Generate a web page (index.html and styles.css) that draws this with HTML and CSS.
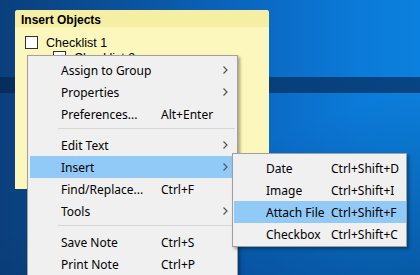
FILE: index.html
```html
<!DOCTYPE html>
<html lang="en">
<head>
    <meta charset="UTF-8">
    <meta name="viewport" content="width=device-width, initial-scale=1.0">
    <title>Insert Objects</title>
    <link rel="stylesheet" href="styles.css">
</head>
<body>
    <div class="desktop">
        <div class="band"></div>

        <div class="note">
            <div class="note-head">Insert Objects</div>
            <div class="note-body">
                <div class="check-row"><span class="box"></span>Checklist 1</div>
                <div class="check-row indent"><span class="box checked">&#10003;</span>Checklist 2</div>
            </div>
        </div>

        <div class="menu main-menu">
            <div class="item"><span>Assign to Group</span><span></span><svg class="arrow" width="5" height="8" viewBox="0 0 5 8"><polyline points="0.5,0.5 4,4 0.5,7.5"/></svg></div>
            <div class="item"><span>Properties</span><span></span><svg class="arrow" width="5" height="8" viewBox="0 0 5 8"><polyline points="0.5,0.5 4,4 0.5,7.5"/></svg></div>
            <div class="item"><span>Preferences...</span><span>Alt+Enter</span></div>
            <div class="sep"></div>
            <div class="item"><span>Edit Text</span><span></span><svg class="arrow" width="5" height="8" viewBox="0 0 5 8"><polyline points="0.5,0.5 4,4 0.5,7.5"/></svg></div>
            <div class="item active"><span>Insert</span><span></span><svg class="arrow" width="5" height="8" viewBox="0 0 5 8"><polyline points="0.5,0.5 4,4 0.5,7.5"/></svg></div>
            <div class="item"><span>Find/Replace...</span><span>Ctrl+F</span></div>
            <div class="item"><span>Tools</span><span></span><svg class="arrow" width="5" height="8" viewBox="0 0 5 8"><polyline points="0.5,0.5 4,4 0.5,7.5"/></svg></div>
            <div class="sep"></div>
            <div class="item"><span>Save Note</span><span>Ctrl+S</span></div>
            <div class="item"><span>Print Note</span><span>Ctrl+P</span></div>
        </div>

        <div class="menu sub-menu">
            <div class="item"><span>Date</span><span>Ctrl+Shift+D</span></div>
            <div class="item"><span>Image</span><span>Ctrl+Shift+I</span></div>
            <div class="item active"><span>Attach File</span><span>Ctrl+Shift+F</span></div>
            <div class="item"><span>Checkbox</span><span>Ctrl+Shift+C</span></div>
        </div>
    </div>
</body>
</html>
```

FILE: styles.css
```css
body {
    margin: 0;
    font-family: "Noto Sans", sans-serif;
}
.desktop {
    position: relative;
    width: 420px;
    height: 275px;
    overflow: hidden;
    background:
        linear-gradient(160deg, rgba(0, 20, 60, 0) 55%, rgba(0, 20, 60, 0.35) 100%),
        linear-gradient(90deg, #0a3f7c 0%, #0b4f96 25%, #0a68c2 60%, #0b7ad8 85%, #0c80de 100%);
}
.band {
    position: absolute;
    left: 0;
    right: 0;
    top: 77px;
    height: 16px;
    background: linear-gradient(90deg, #052e5c, #073f78 60%, #074583);
}

/* sticky note */
.note {
    position: absolute;
    left: 15px;
    top: 10px;
    width: 254px;
    height: 179px;
    background: #fcf8bd;
    border-radius: 3px 3px 0 0;
    font-family: "Liberation Sans", Arial, sans-serif;
    font-size: 12.5px;
    color: #000;
}
.note-head {
    height: 17px;
    padding: 3px 0 0 6px;
    box-sizing: border-box;
    background: #f6efa3;
    font-weight: bold;
    font-size: 12px;
    border-radius: 3px 3px 0 0;
}
.note-body {
    padding: 8px 0 0 10px;
}
.check-row {
    display: flex;
    align-items: center;
    gap: 8px;
    height: 15px;
}
.check-row.indent {
    margin-top: 0;
    padding-left: 28px;
}
.box {
    width: 11px;
    height: 11px;
    border: 1px solid #333;
    background: #fff;
    font-size: 10px;
    line-height: 11px;
    text-align: center;
}

/* context menus */
.menu {
    position: absolute;
    background: #f0f0f0;
    border: 1px solid #a0a0a0;
    box-shadow: 2px 2px 3px rgba(0, 0, 0, 0.35);
    font-size: 12px;
    color: #000;
}
.main-menu {
    left: 27px;
    top: 55px;
    width: 209px;
    padding: 3px 0;
}
.sub-menu {
    left: 232px;
    top: 153px;
    width: 173px;
    padding: 3px 0 1px;
}
.item {
    display: grid;
    align-items: center;
    height: 22px;
    white-space: nowrap;
}
.main-menu .item {
    grid-template-columns: 100px 1fr 12px;
    padding-left: 31px;
    margin: 0 2px;
}
.sub-menu .item {
    grid-template-columns: 65px 1fr;
    padding-left: 32px;
    margin: 0 0 0 1px;
}
.item.active {
    background: #91c9f7;
}
.arrow {
    fill: none;
    stroke: #555;
    stroke-width: 1.2;
}
.sep {
    height: 1px;
    margin: 3px 2px 5px 30px;
    background: #d7d7d7;
}
```
